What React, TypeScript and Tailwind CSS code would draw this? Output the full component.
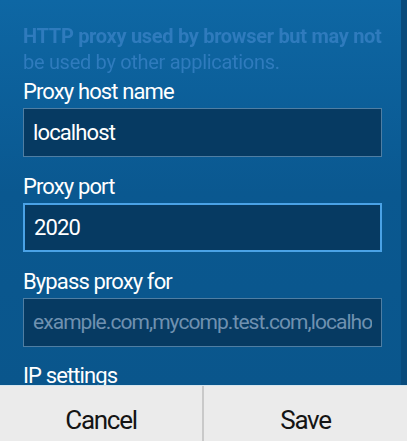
export default function App() {
  const font = { fontFamily: 'Roboto, "Noto Sans", sans-serif' }

  return (
    <div style={font} className="w-[407px] h-[441px] flex flex-col overflow-hidden">
      {/* Form */}
      <div className="h-[385px] shrink-0 overflow-hidden pl-[23px] pr-[19px] pt-[23px] bg-gradient-to-b from-[#0e67a4] via-[#0a5890] to-[#0a568c] border-r-[6px] border-[#084b7c]">
        <p className="text-[20px] leading-[26px] text-[#2f7bbd] tracking-[-0.015em] blur-[0.7px] whitespace-nowrap">
          <span className="font-bold">HTTP proxy used by browser but may not</span>
          <br />
          be used by other applications.
        </p>

        <Field label="Proxy host name" value="localhost" first />
        <Field label="Proxy port" value="2020" focused />
        <Field label="Bypass proxy for" placeholder="example.com,mycomp.test.com,localhost" />

        <div className="mt-[16px] text-[22px] leading-[26px] text-white tracking-[-0.04em]">IP settings</div>
      </div>

      {/* Buttons */}
      <div className="flex-1 flex bg-[#ebebeb] border-t border-[#d6e6ef]">
        <button className="w-[202px] pt-[19px] self-start text-[26px] leading-[30px] text-[#141414] tracking-[-0.05em]">
          Cancel
        </button>
        <div className="w-[2px] bg-[#c9c9c9]" />
        <button className="flex-1 pt-[19px] self-start text-[26px] leading-[30px] text-[#141414] tracking-[-0.05em]">
          Save
        </button>
      </div>
    </div>
  )
}

function Field({
  label,
  value,
  placeholder,
  focused,
  first,
}: {
  label: string
  value?: string
  placeholder?: string
  focused?: boolean
  first?: boolean
}) {
  return (
    <div className={first ? 'mt-[4px]' : 'mt-[17px]'}>
      <div className="text-[22px] leading-[26px] text-white tracking-[-0.04em]">{label}</div>
      <div
        className={`mt-[3px] h-[49px] flex items-center px-[9px] bg-[#063a62] ${
          focused ? 'border-2 border-[#4aa2e6]' : 'border border-[#4f7ea3]'
        }`}
      >
        <div className="flex-1 overflow-hidden whitespace-nowrap">
          {value ? (
            <span className="text-[22px] leading-[33px] text-white tracking-[-0.04em]">{value}</span>
          ) : (
            <span className="text-[21px] leading-[33px] text-[#6f91b0] tracking-[-0.045em]">{placeholder}</span>
          )}
        </div>
      </div>
    </div>
  )
}
